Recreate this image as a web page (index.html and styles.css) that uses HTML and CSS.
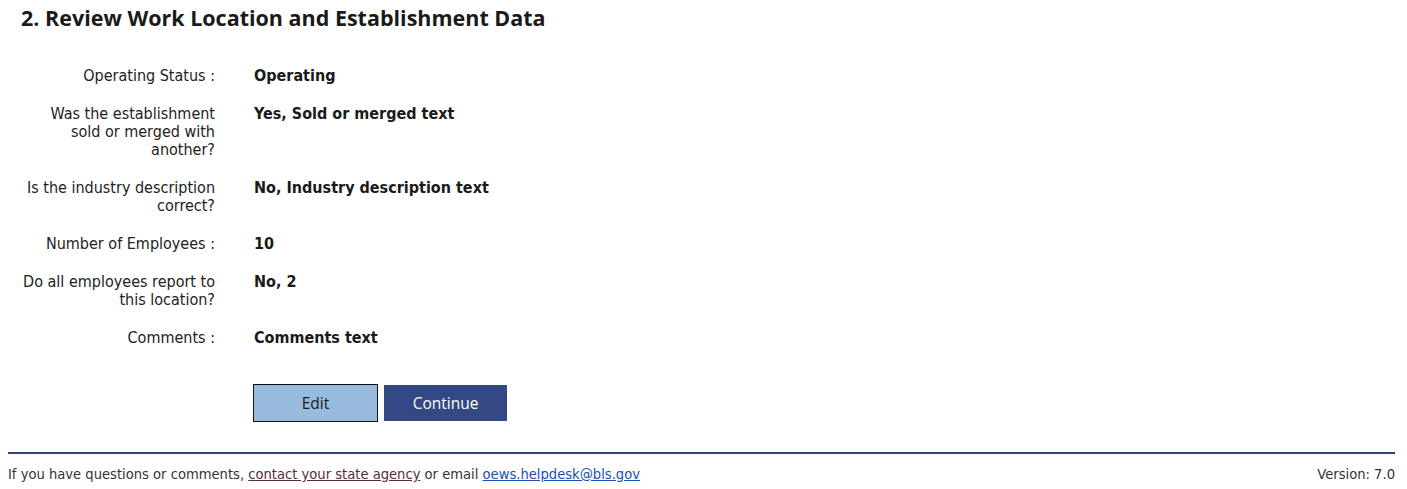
FILE: index.html
```html
<!DOCTYPE html>
<html>
<head>
<meta charset="utf-8">
<link rel="stylesheet" href="styles.css">
</head>
<body>
<main class="page">
  <h2 class="title">2. Review Work Location and Establishment Data</h2>
  <dl class="review">
    <dt>Operating Status :</dt>
    <dd>Operating</dd>
    <dt>Was the establishment sold or merged with another?</dt>
    <dd>Yes, Sold or merged text</dd>
    <dt>Is the industry description correct?</dt>
    <dd>No, Industry description text</dd>
    <dt>Number of Employees :</dt>
    <dd>10</dd>
    <dt>Do all employees report to this location?</dt>
    <dd>No, 2</dd>
    <dt>Comments :</dt>
    <dd>Comments text</dd>
  </dl>
  <div class="actions">
    <button class="btn btn-edit" type="button">Edit</button>
    <button class="btn btn-continue" type="button">Continue</button>
  </div>
</main>
<footer class="footer">
  <p class="footer-text">If you have questions or comments, <a class="link-agency" href="#">contact your state agency</a> or email <a class="link-mail" href="#">oews.helpdesk@bls.gov</a></p>
  <p class="version">Version: 7.0</p>
</footer>
</body>
</html>
```

FILE: styles.css
```css
html, body {
  margin: 0;
  padding: 0;
  background: #fff;
}
body {
  padding: 0 12px 0 8px;
  font-family: "DejaVu Sans Condensed", "DejaVu Sans", sans-serif;
  font-size: 16px;
  color: #222;
}
.page {
  padding: 0;
}
.title {
  margin: 0;
  padding: 5px 0 0 13px;
  font-family: "Open Sans", "Noto Sans", sans-serif;
  font-weight: 700;
  font-size: 21.5px;
  line-height: 26px;
  color: #1a1a1a;
}
.review {
  display: grid;
  grid-template-columns: 207px 1fr;
  column-gap: 39px;
  row-gap: 20px;
  margin: 36px 0 0 0;
  line-height: 18px;
}
.review dt {
  margin: 0;
  text-align: right;
  padding-left: 15px;
  color: #222;
}
.review dd {
  margin: 0;
  font-weight: 700;
  color: #1a1a1a;
}
.actions {
  display: flex;
  align-items: center;
  gap: 6px;
  margin: 37px 0 0 245px;
}
.btn {
  font-family: "Open Sans", "Noto Sans", sans-serif;
  font-size: 15.5px;
  height: 38px;
  padding: 0;
  cursor: pointer;
}
.btn-edit {
  width: 125px;
  background: #99badf;
  border: 1px solid #111;
  color: #1a1a1a;
}
.btn-continue {
  width: 123px;
  height: 36px;
  background: #344883;
  border: none;
  color: #fff;
}
.footer {
  display: flex;
  justify-content: space-between;
  align-items: center;
  margin-top: 30px;
  border-top: 2px solid #2f4482;
  padding-top: 11px;
  font-size: 14.6px;
  color: #333;
}
.footer p {
  margin: 0;
  line-height: 18px;
}
.link-agency {
  color: #5a2a3a;
}
.link-mail {
  color: #1a4fb5;
}
```
